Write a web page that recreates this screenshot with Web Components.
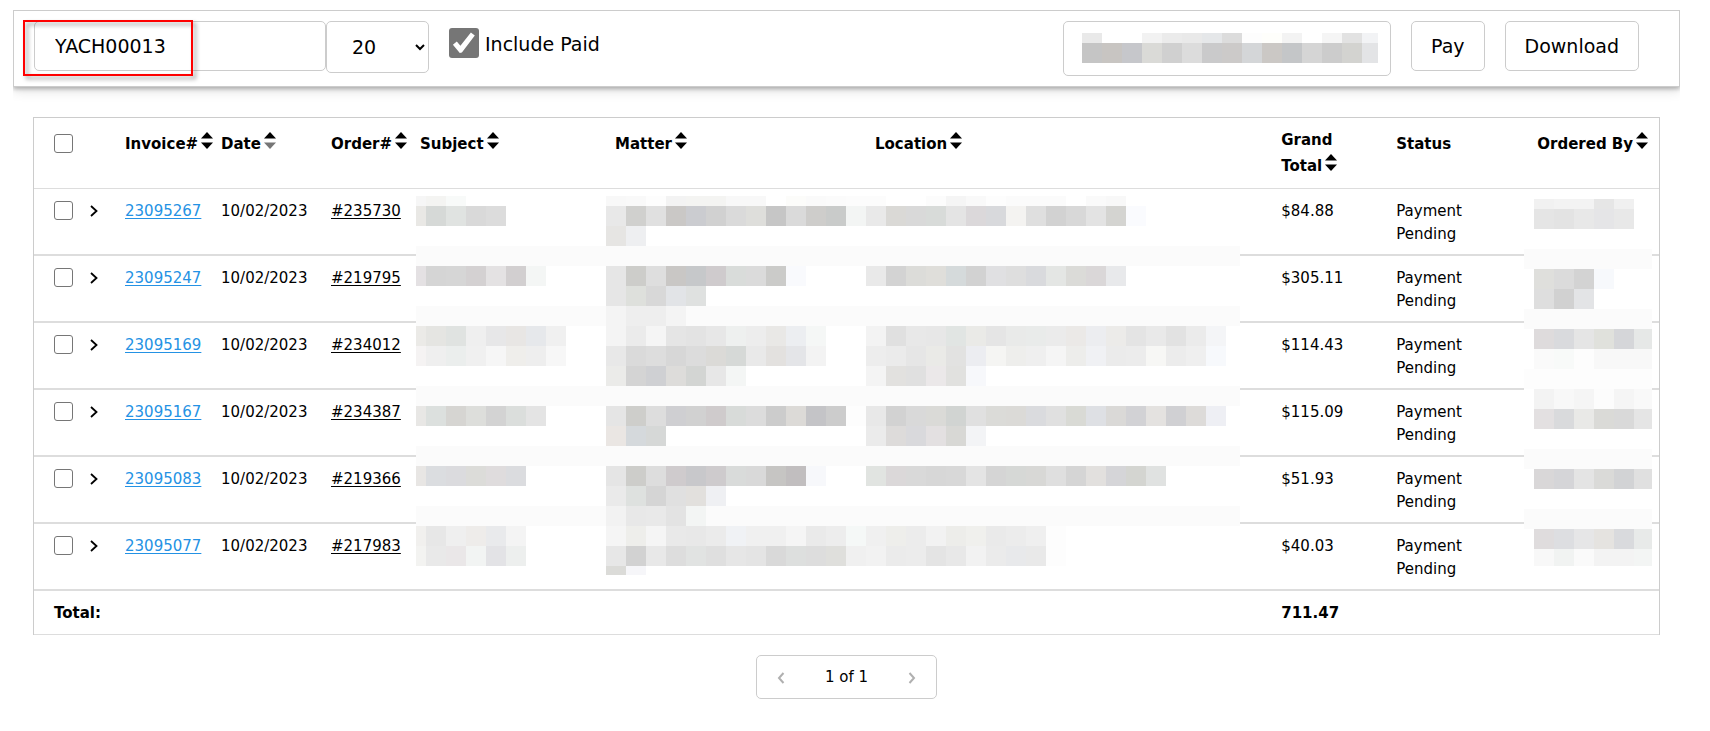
<!DOCTYPE html>
<html lang="en">
<head>
<meta charset="utf-8">
<title>Invoices</title>
<style>
  body {
    margin: 10px 30px 24px 13px;
    background: #fff;
    color: #000;
    font: 15px/23px Verdana, "DejaVu Sans", sans-serif;
  }
</style>
</head>
<body>
<invoice-page></invoice-page>

<template id="invoice-page">
  <style>
    :host { display: block; }
    main { padding: 30px 20px 0; }
    footer { display: flex; justify-content: center; padding: 20px; }
  </style>
  <filter-bar></filter-bar>
  <main><invoice-table></invoice-table></main>
  <footer><page-nav>1 of 1</page-nav></footer>
</template>

<template id="filter-bar">
  <style>
    :host {
      display: flex; align-items: flex-start; justify-content: space-between;
      padding: 10px 40px 10px 20px;
      border: 1px solid #ccc;
      box-shadow: 0 2px 4px rgba(0, 0, 0, .25), 0 3px 12px rgba(0, 0, 0, .14);
      font-size: 19px;
    }
    .group { display: flex; align-items: flex-start; }
    .actions { gap: 20px; }
    .field { position: relative; }
    input, select {
      box-sizing: border-box; margin: 0; font: inherit; color: #000;
      background-color: #fff; border: 1px solid #ccc; border-radius: 5px;
    }
    #account { display: block; width: 292px; height: 50px; padding: 0 20px; }
    #size { width: 103px; height: 52px; padding: 0 0 0 21px; }
    #payer { display: block; width: 328px; height: 55px; padding: 0 18px; }
    .mark {
      position: absolute; left: -11px; top: -1px; width: 166px; height: 52px;
      border: 2px solid #f00; pointer-events: none;
      filter: drop-shadow(3px 3px 2px rgba(0, 0, 0, .4));
    }
    pixel-mosaic { position: absolute; left: 19px; top: 12px; }
    .paid { display: flex; align-items: center; gap: 6px; padding: 7px 0 0 20px; }
    .paid label { padding-top: 2px; }
    #paid {
      appearance: none; width: 30px; height: 30px; border: 0; border-radius: 3px;
      background: #767676;
    }
    #paid:checked::before {
      content: ""; display: block; width: 30px; height: 30px; background: #fff;
      clip-path: polygon(13% 56%, 26% 45%, 38% 59%, 73% 15%, 86% 25%, 43% 82%, 36% 83%);
    }
  </style>
  <div class="group">
    <div class="field">
      <input id="account" type="text" value="YACH00013" aria-label="Account">
      <span class="mark"></span>
    </div>
    <select id="size" aria-label="Rows per page"><option>20</option><option>50</option></select>
    <div class="paid"><input id="paid" type="checkbox" checked><label for="paid">Include Paid</label></div>
  </div>
  <div class="group actions">
    <div class="field">
      <input id="payer" type="text" aria-label="Payer">
      <pixel-mosaic name="payer"></pixel-mosaic>
    </div>
    <outline-button>Pay</outline-button>
    <outline-button>Download</outline-button>
  </div>
</template>

<template id="outline-button">
  <style>
    :host { display: block; }
    button {
      height: 50px; padding: 0 19px; font: inherit; color: #000; background: #fff;
      border: 1px solid #ccc; border-radius: 5px; display: block;
    }
  </style>
  <button type="button"><slot></slot></button>
</template>

<template id="sort-button">
  <style>
    :host { display: block; }
    button {
      display: block; padding: 0; border: 0; background: none; font: inherit;
      color: inherit; text-align: left; white-space: nowrap;
    }
    svg { width: 12px; height: 17px; margin-left: 3px; vertical-align: baseline; }
    :host([sorted]) .down { fill: #767676; }
  </style>
  <button type="button"><slot></slot><svg viewBox="0 0 12 17" aria-hidden="true"><path d="M0 6.500 6 0l6 6.500z"/><path class="down" d="M0 10.500h12L6 17z"/></svg></button>
</template>

<template id="invoice-table">
  <style>
    :host { display: block; position: relative; }
    table {
      width: 100%; table-layout: fixed; border-collapse: separate; border-spacing: 0;
      border: 1px solid #ccc; border-bottom: 0;
    }
    th, td { padding: 11px 0 8px; text-align: left; vertical-align: top; }
    td { border-bottom: 2px solid #ddd; height: 46px; }
    thead th { padding: 13px 0 0; height: 57px; line-height: 26px; border-bottom: 1px solid #ddd; }
    thead th.tall { padding-top: 9px; height: 61px; }
    tfoot th, tfoot td { height: 24px; border-bottom: 1px solid #ddd; font-weight: bold; }
    th:first-child, td:first-child { padding-left: 20px; }
    .pick { display: flex; align-items: center; gap: 17px; height: 21px; }
    thead .pick { height: 25px; }
    input {
      appearance: none; box-sizing: border-box; width: 19px; height: 19px; margin: 0;
      border: 1px solid #767676; border-radius: 3px; background: #fff;
    }
    .pick button { display: flex; padding: 0; border: 0; background: none; }
    .pick svg { width: 8px; height: 12px; fill: none; stroke: #000; stroke-width: 1.8; }
    a { color: #000; text-underline-offset: 2px; text-decoration-thickness: 1px; }
    a.invoice { color: #2492e4; }
    .status { width: 80px; }
    .c-pick { width: 91px; } .c-invoice { width: 96px; } .c-date { width: 110px; }
    .c-order { width: 89px; } .c-subject { width: 12%; } .c-matter { width: 16%; }
    .c-location { width: 25%; } .c-total { width: 115px; } .c-status { width: 141px; }
    pixel-mosaic { position: absolute; }
    .details { left: 383px; top: 79px; }
    .people { right: 8px; top: 82px; }
  </style>
  <table>
    <colgroup>
      <col class="c-pick"><col class="c-invoice"><col class="c-date"><col class="c-order">
      <col class="c-subject"><col class="c-matter"><col class="c-location">
      <col class="c-total"><col class="c-status"><col>
    </colgroup>
    <thead>
      <tr>
        <th><div class="pick"><input type="checkbox" aria-label="Select all invoices"></div></th>
        <th><sort-button>Invoice#</sort-button></th>
        <th><sort-button sorted>Date</sort-button></th>
        <th><sort-button>Order#</sort-button></th>
        <th><sort-button>Subject</sort-button></th>
        <th><sort-button>Matter</sort-button></th>
        <th><sort-button>Location</sort-button></th>
        <th class="tall"><sort-button>Grand<br>Total</sort-button></th>
        <th>Status</th>
        <th><sort-button>Ordered By</sort-button></th>
      </tr>
    </thead>
    <tbody></tbody>
    <tfoot>
      <tr><th colspan="7" scope="row">Total:</th><td>711.47</td><td></td><td></td></tr>
    </tfoot>
  </table>
  <pixel-mosaic class="details" name="details"></pixel-mosaic>
  <pixel-mosaic class="people" name="people"></pixel-mosaic>
</template>

<template id="page-nav">
  <style>
    :host {
      display: flex; align-items: center; justify-content: space-between;
      box-sizing: border-box; width: 181px; height: 44px; padding: 1px 20px 0;
      border: 1px solid #ccc; border-radius: 5px;
    }
    button { display: flex; padding: 0; border: 0; background: none; }
    svg { width: 8px; height: 12px; fill: none; stroke: #b0b0b0; stroke-width: 2; }
  </style>
  <button type="button" aria-label="Previous page" disabled><svg viewBox="0 0 8 12"><path d="M6.500 1 2 6l4.500 5"/></svg></button>
  <span><slot></slot></span>
  <button type="button" aria-label="Next page" disabled><svg viewBox="0 0 8 12"><path d="M1.500 1 6 6l-4.500 5"/></svg></button>
</template>

<script>
  class TemplateElement extends HTMLElement {
    constructor() {
      super();
      this.attachShadow({ mode: "open" })
        .append(document.getElementById(this.localName).content.cloneNode(true));
    }
  }

  const INVOICES = [
    ["23095267", "235730", "$84.88"],
    ["23095247", "219795", "$305.11"],
    ["23095169", "234012", "$114.43"],
    ["23095167", "234387", "$115.09"],
    ["23095083", "219366", "$51.93"],
    ["23095077", "217983", "$40.03"]
  ];

  // Hidden values are drawn as 20px blocks. Each line is one row of blocks:
  // an optional "=" background for the row, "@n" to jump to a column, then colours.
  const MOSAICS = {
    payer: { width: 296, height: 30, cropX: 0, cropY: 10, rows: `
e9e9e9 ffffff ffffff f2f2f2 ebebeb e9e9e9 e5e7e9 dcdcdc fdfdfd fefefb f3f3f3 ffffff f5f5f5 e2e2e2 f2f3f5
c5c5c5 c8c5c2 c6c7cb dadad7 d0d0d0 dcdcdc cacacb cccac9 d4d6d8 cbc8c5 c4c6c8 d5d5d5 cccccc d3d3d0 e3e4e6` },
    details: { width: 824, height: 379, cropX: 10, cropY: 10, rows: `
f6f6f6 f4f4f2 f8faf9 @10 f8f8f8 f9f9f9 fdfdfd f3f3f3 f4f4f2 f4f4f2 f8f8f8 f8f8f8 ffffff fcfcfa fafafa fbfbfb fcfcfc fcfcfc @26 fcfcfc f5f5f5 f9f9f9 fdfdfd fbfbfb fbfbfb fbfbfb ffffff fafafa f8f8f8
e9e8e5 d6d9d7 e0e3e1 d9d9d9 dcdcdc @10 e8e8e8 d0d0ce e0e0e0 cac8c6 cbccd0 d1d1d1 dadada dededb c6c6c6 dadada cecdcb c9cbca f3f5f4 e9e9e9 dad9d6 d9d9d9 d8dbd9 e4e4e4 dbd8da d8d9dc f4f3f1 dfdfdf d2d2d2 d8d8d8 e3e3e3 d4d4d1 fafbfe
@10 e6e5e3 eeeff1
=fbfbfb
e4e1e3 d5d5d5 d6d6d6 d4d1d2 e4e2e3 d2cfd0 f4f6f5 @10 e6e6e6 cdcdca dedede c9c7c5 c6c8ca cfcbcd d9dcda dbdbdb cbcbc9 f9fafd @23 e9e9e9 d3d3d3 dcdcd9 dfdeda d5dadb d2d2d2 e0e0e2 dedede d9dadd e4e6e4 dbdbd8 dad7d8 e8e9eb
@10 e6e6e6 dee0dc d8d8d8 e2e4e7 dfe1e0
=fbfbfb @10 f4f4f4 eeeeee eeeeee f4f4f4
ebeae7 e5e5e2 e0e3e1 efefef e7e7e8 e8e6e4 e6e8eb f0f0f0 @10 f4f4f4 ebebeb f5f5f5 e5e5e5 e3e3e3 e7e7e7 eef0ef ededed e9e8e6 eceef1 f5f7f6 @23 f3f3f3 e0e0e0 e8e8e8 e7e7e7 e1e5e3 eaeae7 e5e5e5 e9eae9 e9ebea ebebeb ebe9e7 ecedf0 ecebe9 e4e4e4 e9e9e9 e2e2e2 ebebeb f4f5f7
f5f3f3 efefef ebeeed f0f0f0 f6f6f6 efeeeb eeeeee f7f7f7 @10 e8e8e8 dadada dddddd d7d7d7 dcdcdc dbdad7 d6d9d7 e9e9e9 e3e1df e4e5e8 f3f3f3 @23 ededed ebebeb e6e6e6 eaeae7 e2e2e1 ecedf1 f5f5f3 eeeeec efefef f5f5f5 ededeb f0f1f4 ebebeb ececec f7f7f5 ececec efefef f7f9fc
@10 ebebe9 d4d4d4 cfd0d3 dddcda d3d5d3 e7e7e7 f4f6f5 @23 f4f4f4 e2e1df e0e0e0 ebe8e9 e1e1df f7f8fb
=fbfbfb
e8e7e5 dce0de d6d5d2 dddedb d3d3d3 dbdedc e4e4e4 @10 e5e5e5 cececb dddddd cfcfd2 d1d1d1 cfcbcc d8dbd9 dcdcdc cccccc dcdad7 c4c4c7 cccccc fdfdfd e8e8e8 d2d2d2 d9d9d9 dadad7 d1d4d2 e0e0e0 dbdbd8 dbdad7 dadbde e0e0e0 d9dad5 dee0e4 dad9d7 d2d2d5 e4e2e0 d0d0d3 dddbd9 eeeff4
@10 eae6e3 d5d9dc d6d8d7 @23 ebebeb dddbda d9d9dc e3e0e1 d8d8d5 f3f4f6
=fbfbfb
e8e6e4 dbdde0 dbdbde dcdcd9 dfdcdd dbdcdf @10 e5e5e5 cdcdca dddddd cfcbcd c8c8cb cecbcd d9dbda d9d9d9 c6c5c3 c1bebf f7f8fb @23 e1e4e1 dbd8d9 d9d9d9 d7d7d7 d8d8d8 e4e4e4 d5d5d5 d6d8d6 d8d8d6 dfdfdf d5d5d5 e2e0de d5d5d8 d4d5d1 e0e2e1
@10 eaeaea dee1df d5d5d5 e0e0e0 e2e0dd eff0f3
=fbfbfb @10 f2f2f2 e8e8e8 e9e9e9 e3e3e3 f3f5f4
f1f0ee e7e7e7 efefef eeecea e9eaec f4f4f4 @10 f5f5f5 eeeeeb f5f5f5 e9e9e9 e8e8e8 ebebeb f0f2f5 f0f0f0 f0f0f0 f5f5f5 eaeaea ededed f5f8f7 f0f0f0 eeeeeb ececec f2f2f2 ededea f0f0ed eaeaea ececec efefef fdfdfd
f3f3f1 e9e9e9 eae7e8 f2f4f3 e3e3e6 edefee @10 e7e7e7 d2d2d2 e8e8e8 dddddd e1e3e2 dfdfdf e6e6e6 e4e4e4 d9d9d9 dddfde dddddd dfdfdc f0f0f0 f2f2f2 ebebeb ececec e4e4e4 e8e8e8 f2f2f2 ebebeb e8e9eb e9e9e9 fdfdfd
@10 dbdbd8 f6f6f9` },
    people: { width: 128, height: 367, cropX: 10, cropY: 10, rows: `
@1 f1f1f1 f3f3f3 f3f3f3 e6e6e6 f0f0f0
@1 e5e5e5 e3e3e3 e8e8e8 e5e5e7 e8e8e8
@1
=fbfbfb
@1 dfdfdc dbdbdb d3d3d3 f7f9fc
@1 dedede d1d1d1 e3e4e6
=fbfbfb
@1 dedbdc d9dadd e5e5e5 e0e1dc d5d6d9 e6e8e7
@1 fafafa f8faf9 fdfdfd f8f8f8 f8f8f8 f8f8f8
=fdfdfd
@1 f3f3f3 f8f8f8 f5f5f5 fcfcfc f5f5f5 f9f9f9
@1 e3e0e1 d9dadc e9e9e7 dadad7 d9d9d9 e5e5e5
@1
=fbfbfb
@1 d9d7d8 d5d5d8 e4e4e4 dadad8 d2d3d5 e0e0e0
@1
=fbfbfb
@1 dfdcdd dddee1 e6e6e7 e5e3e0 d9dadd e8eae9
@1 f8f8f8 f1f3f2 fafafa f3f3f3 f3f3f3 f3f5f4` }
  };

  customElements.define("pixel-mosaic", class extends HTMLElement {
    connectedCallback() {
      if (this.shadowRoot) return;
      const m = MOSAICS[this.getAttribute("name")];
      let blocks = "";
      m.rows.trim().split("\n").forEach((line, row) => {
        let column = 0;
        for (const token of line.split(" ")) {
          if (token[0] === "=") {
            blocks += `<rect y="${row * 20}" width="900" height="20" fill="#${token.slice(1)}"/>`;
          } else if (token[0] === "@") {
            column = Number(token.slice(1));
          } else {
            blocks += `<rect x="${column++ * 20}" y="${row * 20}" width="20" height="20" fill="#${token}"/>`;
          }
        }
      });
      this.attachShadow({ mode: "open" }).innerHTML = `
        <style>
          :host { display: block; pointer-events: none; }
          svg { display: block; background: #fff; }
        </style>
        <svg width="${m.width}" height="${m.height}" shape-rendering="crispEdges" aria-hidden="true"
          viewBox="${m.cropX} ${m.cropY} ${m.width} ${m.height}">${blocks}</svg>`;
    }
  });

  customElements.define("outline-button", class extends TemplateElement {});
  customElements.define("sort-button", class extends TemplateElement {});
  customElements.define("page-nav", class extends TemplateElement {});
  customElements.define("filter-bar", class extends TemplateElement {});

  customElements.define("invoice-table", class extends TemplateElement {
    connectedCallback() {
      this.shadowRoot.querySelector("tbody").innerHTML = INVOICES.map(([id, order, total]) => `
        <tr>
          <td><div class="pick">
            <input type="checkbox" aria-label="Select invoice ${id}">
            <button type="button" aria-label="Expand invoice ${id}"><svg viewBox="0 0 8 12"><path d="M1 1l5.500 5L1 11"/></svg></button>
          </div></td>
          <td><a class="invoice" href="#invoice-${id}">${id}</a></td>
          <td>10/02/2023</td>
          <td><a href="#order-${order}">#${order}</a></td>
          <td></td><td></td><td></td>
          <td>${total}</td>
          <td><div class="status">Payment Pending</div></td>
          <td></td>
        </tr>`).join("");
    }
  });

  customElements.define("invoice-page", class extends TemplateElement {});
</script>
</body>
</html>
